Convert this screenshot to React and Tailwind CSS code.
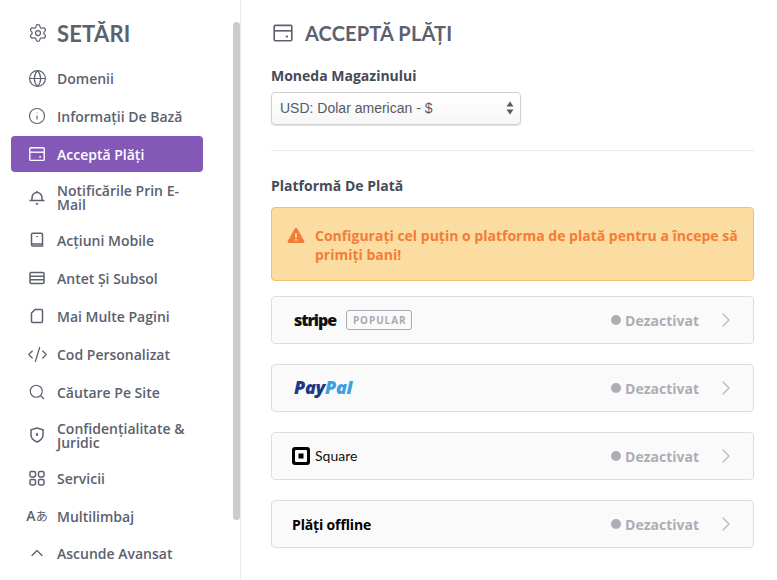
import React from 'react';
import { Settings, Globe, Info, CodeXml, Search, ChevronUp, ChevronRight } from 'lucide-react';

const CardIcon = ({ className }) => (
  <svg viewBox="0 0 20 20" fill="none" stroke="currentColor" strokeWidth="1.5" className={className}>
    <rect x="2" y="3" width="16" height="14" rx="1" />
    <path d="M2 8h16" />
    <path d="M12.5 13.2h2" strokeWidth="1.6" />
  </svg>
);

const BellIcon = ({ className }) => (
  <svg viewBox="0 0 18 18" fill="none" stroke="currentColor" strokeWidth="1.5" className={className}>
    <path d="M4 12.5V9.5a5 5 0 0 1 10 0v3" />
    <path d="M1.5 12.5h15" />
    <path d="M7.8 15.800h2.4" />
    <path d="M9 4.200V3" />
  </svg>
);

const TabletIcon = ({ className }) => (
  <svg viewBox="0 0 18 18" fill="none" stroke="currentColor" strokeWidth="1.5" className={className}>
    <path d="M3.500 3.500a1.300 1.300 0 0 1 1.300-1.300h8.400a1.300 1.300 0 0 1 1.300 1.300v11.500H4.800a1.300 1.300 0 0 1-1.300-1.300z" />
    <path d="M3.500 13h11" />
    <path d="M9 5v1" strokeWidth="1.6" />
  </svg>
);

const BarsIcon = ({ className }) => (
  <svg viewBox="0 0 18 18" fill="none" stroke="currentColor" strokeWidth="1.5" className={className}>
    <rect x="2" y="3.500" width="14" height="11" rx="1.200" />
    <path d="M2 7.200h14M2 10.800h14" />
  </svg>
);

const PageIcon = ({ className }) => (
  <svg viewBox="0 0 18 18" fill="none" stroke="currentColor" strokeWidth="1.5" className={className}>
    <path d="M7 2.500h6.300a1.200 1.200 0 0 1 1.200 1.200v10.600a1.200 1.200 0 0 1-1.200 1.200H4.700a1.200 1.200 0 0 1-1.200-1.200V6z" />
  </svg>
);

const ShieldIcon = ({ className }) => (
  <svg viewBox="0 0 18 18" fill="none" stroke="currentColor" strokeWidth="1.5" className={className}>
    <path d="M9 2l6 1.800v5.200c0 3.400-2.600 5.600-6 7-3.400-1.400-6-3.600-6-7V3.800z" />
    <path d="M9 7v3" strokeWidth="1.8" />
  </svg>
);

const GridIcon = ({ className }) => (
  <svg viewBox="0 0 18 18" fill="none" stroke="currentColor" strokeWidth="1.5" className={className}>
    <rect x="2" y="2.500" width="5.500" height="5.500" rx="1.400" />
    <rect x="10.500" y="2.500" width="5.500" height="5.500" rx="1.400" />
    <rect x="2" y="10.500" width="5.500" height="5.500" rx="1.400" />
    <rect x="10.500" y="10.500" width="5.500" height="5.500" rx="1.400" />
  </svg>
);

const LangIcon = () => (
  <span className="flex w-[18px] items-baseline justify-center whitespace-nowrap text-[14px] font-semibold leading-none text-[#5b616e]">
    A<span className="font-['Noto_Sans_CJK_JP',sans-serif] text-[12px] font-normal">あ</span>
  </span>
);

const menu = [
  { label: 'Domenii', icon: <Globe className="h-[19px] w-[19px] shrink-0" strokeWidth={1.5} /> },
  { label: 'Informații De Bază', icon: <Info className="h-[18px] w-[18px] shrink-0" strokeWidth={1.5} /> },
  { label: 'Acceptă Plăți', icon: <CardIcon className="h-[18px] w-[18px] shrink-0" />, active: true },
  { label: 'Notificările Prin E-Mail', icon: <BellIcon className="h-[18px] w-[18px] shrink-0" /> },
  { label: 'Acțiuni Mobile', icon: <TabletIcon className="h-[18px] w-[18px] shrink-0" /> },
  { label: 'Antet Și Subsol', icon: <BarsIcon className="h-[18px] w-[18px] shrink-0" /> },
  { label: 'Mai Multe Pagini', icon: <PageIcon className="h-[18px] w-[18px] shrink-0" /> },
  { label: 'Cod Personalizat', icon: <CodeXml className="h-[21px] w-[21px] shrink-0" strokeWidth={1.4} /> },
  { label: 'Căutare Pe Site', icon: <Search className="h-[18px] w-[18px] shrink-0" strokeWidth={1.5} /> },
  { label: 'Confidențialitate & Juridic', icon: <ShieldIcon className="h-[18px] w-[18px] shrink-0" /> },
  { label: 'Servicii', icon: <GridIcon className="h-[18px] w-[18px] shrink-0" /> },
  { label: 'Multilimbaj', icon: <LangIcon />, short: true },
  { label: 'Ascunde Avansat', icon: <ChevronUp className="h-[20px] w-[20px] shrink-0" strokeWidth={1.5} />, short: true },
];

const Status = () => (
  <div className="ml-auto flex items-center">
    <span className="h-[10px] w-[10px] rounded-full bg-[#abaeb4]" />
    <span className="ml-[4px] text-[14px] font-bold text-[#abaeb4]">Dezactivat</span>
    <ChevronRight className="ml-[15px] h-[24px] w-[24px] text-[#b5b7bc]" strokeWidth={1.2} />
    <span className="w-[15px]" />
  </div>
);

const PayRow = ({ children }) => (
  <div className="flex h-[48px] items-center rounded-[4px] border border-[#dddee0] bg-[#fafafa] pl-[20px]">
    {children}
    <Status />
  </div>
);

export default function App() {
  return (
    <div className="flex h-[580px] w-[777px] overflow-hidden bg-white font-['Open_Sans',sans-serif]">
      {/* Sidebar */}
      <aside className="relative h-full w-[241px] shrink-0 border-r border-[#eceded] pl-[11px] pt-[18px]">
        <div className="flex h-[30px] items-center pl-[17px] text-[#5b616e]">
          <Settings className="h-[20px] w-[20px] shrink-0" strokeWidth={1.5} />
          <span className="ml-[9px] font-['Lato',sans-serif] text-[22px] font-bold tracking-[0.2px]">SETĂRI</span>
        </div>
        <nav className="mt-[12px] flex w-[192px] flex-col gap-[2px]">
          {menu.map((item) => (
            <div
              key={item.label}
              className={`flex items-center rounded-[4px] py-[8px] pl-[17px] pr-[10px] text-[14px] font-semibold leading-[14px] ${
                item.short ? 'min-h-[35px]' : 'min-h-[36px]'
              } ${item.active ? 'bg-[#8458b7] text-white' : 'text-[#5b616e]'}`}
            >
              <span className="flex h-[18px] w-[18px] shrink-0 items-center justify-center">{item.icon}</span>
              <span className="ml-[11px] pt-[2px]">{item.label}</span>
            </div>
          ))}
        </nav>
        <div className="absolute right-0 top-[22px] h-[498px] w-[7px] rounded-full bg-[#cccccc]" />
      </aside>

      {/* Main */}
      <main className="w-[513px] shrink-0 pl-[30px] pt-[18px]">
        <div className="flex h-[30px] items-center pl-[1px] text-[#5b616e]">
          <CardIcon className="h-[22px] w-[22px] shrink-0" />
          <span className="ml-[11px] font-['Lato',sans-serif] text-[20px] font-bold tracking-[0.15px]">ACCEPTĂ PLĂȚI</span>
        </div>

        <label className="mt-[17px] block text-[14px] font-bold leading-[22px] text-[#454b57]">Moneda Magazinului</label>
        <div className="relative mt-[5px] w-[250px]">
          <select className="h-[33px] w-full appearance-none rounded-[4px] border border-[#cfd0d2] bg-gradient-to-b from-white to-[#f6f6f6] pl-[8px] font-['Liberation_Sans',sans-serif] text-[14px] text-[#555a63] shadow-[0_1px_1px_rgba(0,0,0,0.12)]">
            <option>USD: Dolar american - $</option>
          </select>
          <svg viewBox="0 0 8 14" className="pointer-events-none absolute right-[7px] top-[9px] h-[14px] w-[8px] text-[#555a63]" fill="currentColor">
            <path d="M4 0.500l3.500 5H0.500zM4 13.500l-3.500-5h7z" />
          </svg>
        </div>

        <div className="mt-[25px] border-t border-[#e8e8e9]" />

        <h3 className="mt-[24px] text-[14px] font-bold leading-[22px] text-[#454b57]">Platformă De Plată</h3>

        <div className="mt-[10px] flex h-[74px] items-start rounded-[4px] border border-[#f6bd6c] bg-[#fbdda2] pl-[15px] pt-[18px] text-[14px] font-bold leading-[19px] text-[#f47c36]">
          <svg viewBox="0 0 20 18" className="mt-[1px] h-[16px] w-[18px] shrink-0" fill="currentColor">
            <path fillRule="evenodd" d="M10 1a1.500 1.500 0 0 1 1.300.75l8 14A1.500 1.500 0 0 1 18 18H2a1.500 1.500 0 0 1-1.300-2.250l8-14A1.500 1.500 0 0 1 10 1zM9 7v5h2V7zm0 6.500v2h2v-2z" />
          </svg>
          <p className="ml-[10px] w-[430px]">Configurați cel puțin o platforma de plată pentru a începe să primiți bani!</p>
        </div>

        <div className="mt-[15px] flex flex-col gap-[20px]">
          <PayRow>
            <span className="ml-[2px] text-[16px] font-extrabold tracking-[-1.1px] text-[#111]">stripe</span>
            <span className="ml-[10px] flex h-[20px] items-center rounded-[3px] border border-[#a9abb1] pl-[6px] pr-[5px] text-[10px] font-bold tracking-[0.9px] text-[#a9abb1]">POPULAR</span>
          </PayRow>
          <PayRow>
            <span className="mb-[3px] ml-[2px] text-[18px] font-extrabold italic leading-none tracking-[-0.3px]">
              <span className="text-[#1b3a8a]">Pay</span>
              <span className="text-[#3b9fe0]">Pal</span>
            </span>
          </PayRow>
          <PayRow>
            <svg viewBox="0 0 18 18" className="h-[18px] w-[18px] shrink-0">
              <rect width="18" height="18" rx="3" fill="#000" />
              <rect x="3" y="3" width="12" height="12" rx="1" fill="#fafafa" />
              <rect x="6.500" y="6.500" width="5" height="5" fill="#000" />
            </svg>
            <span className="mb-[1px] ml-[5px] font-['Lato',sans-serif] text-[14px] text-[#111]">Square</span>
          </PayRow>
          <PayRow>
            <span className="text-[14px] font-bold tracking-[-0.15px] text-black">Plăți offline</span>
          </PayRow>
        </div>
      </main>
    </div>
  );
}
